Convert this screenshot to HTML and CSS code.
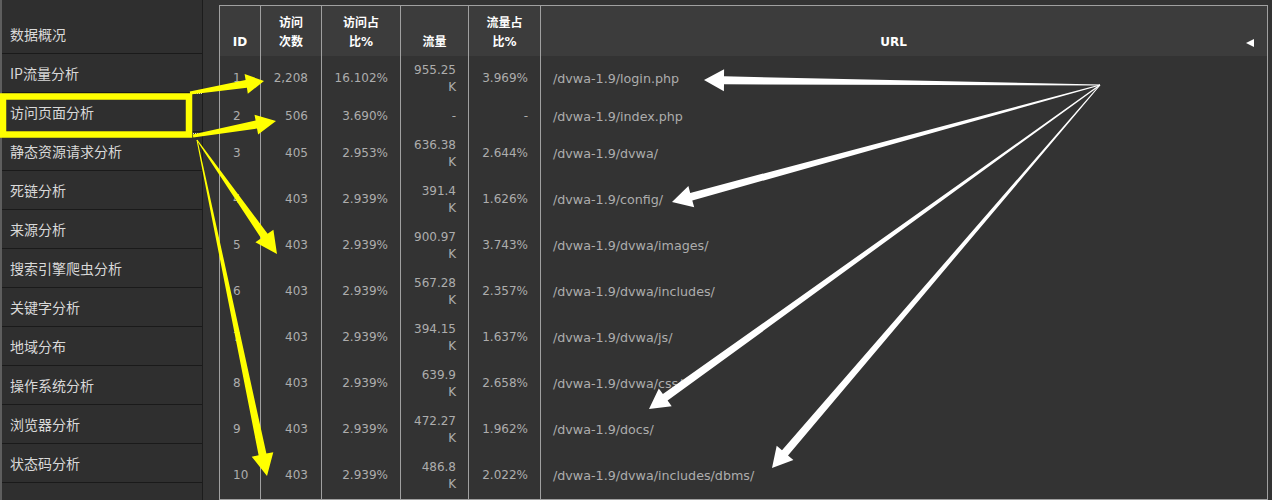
FILE: index.html
```html
<!DOCTYPE html>
<html lang="zh-CN">
<head>
<meta charset="utf-8">
<title>访问页面分析</title>
<link rel="stylesheet" href="styles.css">
</head>
<body>
<div class="layout">
  <nav class="sidebar">
    <ul class="menu">
      <li class="menu-item">数据概况</li>
      <li class="menu-item">IP流量分析</li>
      <li class="menu-item">访问页面分析</li>
      <li class="menu-item">静态资源请求分析</li>
      <li class="menu-item">死链分析</li>
      <li class="menu-item">来源分析</li>
      <li class="menu-item">搜索引擎爬虫分析</li>
      <li class="menu-item">关键字分析</li>
      <li class="menu-item">地域分布</li>
      <li class="menu-item">操作系统分析</li>
      <li class="menu-item">浏览器分析</li>
      <li class="menu-item">状态码分析</li>
      <li class="menu-item"></li>
    </ul>
  </nav>
  <main class="content">
    <table class="report">
      <colgroup>
        <col class="w-id">
        <col class="w-visits">
        <col class="w-vratio">
        <col class="w-traffic">
        <col class="w-tratio">
        <col class="w-url">
      </colgroup>
      <thead>
        <tr>
          <th>ID</th>
          <th>访问<br>次数</th>
          <th>访问占<br>比%</th>
          <th>流量</th>
          <th>流量占<br>比%</th>
          <th class="th-url"><span class="sort-icon"></span>URL</th>
        </tr>
      </thead>
      <tbody>
        <tr><td class="id">1</td><td class="num visits">2,208</td><td class="num">16.102%</td><td class="num">955.25 K</td><td class="num">3.969%</td><td class="url">/dvwa-1.9/login.php</td></tr>
        <tr><td class="id">2</td><td class="num visits">506</td><td class="num">3.690%</td><td class="num">-</td><td class="num">-</td><td class="url">/dvwa-1.9/index.php</td></tr>
        <tr><td class="id">3</td><td class="num visits">405</td><td class="num">2.953%</td><td class="num">636.38 K</td><td class="num">2.644%</td><td class="url">/dvwa-1.9/dvwa/</td></tr>
        <tr><td class="id">4</td><td class="num visits">403</td><td class="num">2.939%</td><td class="num">391.4 K</td><td class="num">1.626%</td><td class="url">/dvwa-1.9/config/</td></tr>
        <tr><td class="id">5</td><td class="num visits">403</td><td class="num">2.939%</td><td class="num">900.97 K</td><td class="num">3.743%</td><td class="url">/dvwa-1.9/dvwa/images/</td></tr>
        <tr><td class="id">6</td><td class="num visits">403</td><td class="num">2.939%</td><td class="num">567.28 K</td><td class="num">2.357%</td><td class="url">/dvwa-1.9/dvwa/includes/</td></tr>
        <tr><td class="id">7</td><td class="num visits">403</td><td class="num">2.939%</td><td class="num">394.15 K</td><td class="num">1.637%</td><td class="url">/dvwa-1.9/dvwa/js/</td></tr>
        <tr><td class="id">8</td><td class="num visits">403</td><td class="num">2.939%</td><td class="num">639.9 K</td><td class="num">2.658%</td><td class="url">/dvwa-1.9/dvwa/css/</td></tr>
        <tr><td class="id">9</td><td class="num visits">403</td><td class="num">2.939%</td><td class="num">472.27 K</td><td class="num">1.962%</td><td class="url">/dvwa-1.9/docs/</td></tr>
        <tr><td class="id">10</td><td class="num visits">403</td><td class="num">2.939%</td><td class="num">486.8 K</td><td class="num">2.022%</td><td class="url">/dvwa-1.9/dvwa/includes/dbms/</td></tr>
      </tbody>
    </table>
  </main>
</div>

<svg class="annotations" width="1272" height="500" viewBox="0 0 1272 500" xmlns="http://www.w3.org/2000/svg">
  <!-- highlight box -->
  <rect x="3" y="96.5" width="186" height="38" fill="none" stroke="#ffff00" stroke-width="6.5"/>
  <line x1="193" y1="93.5" x2="202" y2="93.5" stroke="#dddddd" stroke-width="1" stroke-dasharray="1 1"/>
  <line x1="193" y1="133.5" x2="202" y2="133.5" stroke="#dddddd" stroke-width="1" stroke-dasharray="1 1"/>
  <!-- yellow arrows -->
  <g fill="#ffff00">
    <polygon points="190.2,94.5 246.9,87.8 247.8,93.8 264,81 244.6,74 245.6,79.9 189.8,91.5"/>
    <polygon points="193.3,137.5 257,128.5 258.1,134.4 276,121 254.5,114.7 255.6,120.6 192.7,134.5"/>
    <polygon points="196.6,140.3 261.1,238.3 255.4,242.3 277,254 273.4,229.7 267.6,233.7 197.4,139.7"/>
    <polygon points="196.5,140.1 258.6,455.3 251.7,456.7 267,476 273.3,452.2 266.4,453.6 197.5,139.9"/>
  </g>
  <!-- white arrows -->
  <g fill="#ffffff">
    <polygon points="1100,84.5 724,76.3 724.1,69.3 704,80 723.9,91.3 724,84.3 1100,85.5"/>
    <polygon points="1099.9,84.5 690.2,192.9 688.4,186.1 672,202 694.2,207.3 692.3,200.6 1100.1,85.5"/>
    <polygon points="1099.7,84.6 662.9,394.1 658.8,388.4 649,409 671.7,406.3 667.6,400.6 1100.3,85.4"/>
    <polygon points="1099.6,84.7 782,450.2 776.7,445.7 772,468 793.4,460 788,455.4 1100.4,85.3"/>
  </g>
</svg>
</body>
</html>
```
FILE: styles.css
```css
html, body {
  margin: 0;
  padding: 0;
}

body {
  width: 1272px;
  height: 500px;
  overflow: hidden;
  background: #333333;
  position: relative;
  font-family: "DejaVu Sans", "Noto Sans CJK SC", sans-serif;
}

.layout {
  display: flex;
  align-items: flex-start;
}

/* ---------- sidebar ---------- */
.sidebar {
  flex: 0 0 200px;
  width: 200px;
  min-height: 500px;
  background: #2f2f2f;
  border-left: 2px solid #5e5e5e;
  border-right: 1px solid #1c1c1c;
  padding-top: 15px;
}

.menu {
  list-style: none;
  margin: 0;
  padding: 0;
}

.menu-item {
  height: 38px;
  line-height: 38px;
  padding-left: 8px;
  border-bottom: 1px solid #1a1a1a;
  color: #d9d9d9;
  font-family: "Noto Sans CJK SC", sans-serif;
  font-size: 14px;
  white-space: nowrap;
}

/* ---------- content ---------- */
.content {
  flex: 1 1 auto;
  padding: 5px 0 0 16px;
}

.report {
  width: 1049px;
  table-layout: fixed;
  border-collapse: collapse;
  border: 1px solid #a0a0a0;
  font-size: 12px;
}

.w-id { width: 41px; }
.w-visits { width: 61px; }
.w-vratio { width: 79px; }
.w-traffic { width: 68px; }
.w-tratio { width: 72px; }
.w-url { width: auto; }

.report th,
.report td {
  border-left: 1px solid #a0a0a0;
  border-right: 1px solid #a0a0a0;
}

.report thead tr {
  height: 50px;
}

.report th {
  background: #3c3c3c;
  color: #ffffff;
  font-weight: bold;
  font-size: 12px;
  line-height: 19px;
  text-align: center;
  vertical-align: bottom;
  padding: 0 0 4px;
}

.sort-icon {
  float: right;
  width: 0;
  height: 0;
  margin: 6px 13px 0 0;
  border-top: 4px solid transparent;
  border-bottom: 4px solid transparent;
  border-right: 8px solid #ffffff;
}

.report td {
  color: #adadad;
  line-height: 17px;
  padding: 6px 12px;
  vertical-align: middle;
}

.report td.id {
  text-align: left;
  padding-left: 13px;
}

.report td.num {
  text-align: right;
}

.report td.visits {
  padding-right: 13px;
}

.report td.url {
  text-align: left;
  white-space: nowrap;
  font-size: 12.7px;
}

/* ---------- annotation overlay ---------- */
.annotations {
  position: absolute;
  left: 0;
  top: 0;
  pointer-events: none;
}
```
